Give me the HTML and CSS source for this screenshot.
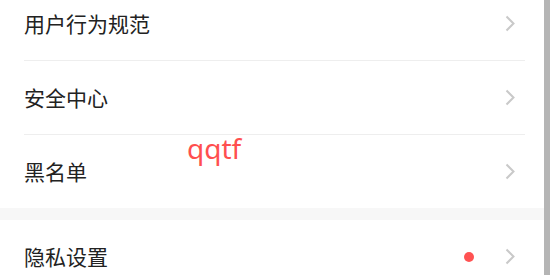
FILE: index.html
```html
<!DOCTYPE html>
<html lang="zh">
<head>
<meta charset="utf-8">
<link rel="stylesheet" href="styles.css">
</head>
<body>
<div class="screen">
  <div class="content">
    <div class="list">
      <div class="row">
        <span class="label">用户行为规范</span>
        <svg class="chev" width="10" height="17" viewBox="0 0 10 17"><path d="M1.5 1.5 L8.5 8.5 L1.5 15.5" fill="none" stroke="#c9c9c9" stroke-width="2"/></svg>
      </div>
      <div class="row">
        <span class="label">安全中心</span>
        <svg class="chev" width="10" height="17" viewBox="0 0 10 17"><path d="M1.5 1.5 L8.5 8.5 L1.5 15.5" fill="none" stroke="#c9c9c9" stroke-width="2"/></svg>
      </div>
      <div class="row last">
        <span class="label">黑名单</span>
        <span class="tag">qqtf</span>
        <svg class="chev" width="10" height="17" viewBox="0 0 10 17"><path d="M1.5 1.5 L8.5 8.5 L1.5 15.5" fill="none" stroke="#c9c9c9" stroke-width="2"/></svg>
      </div>
    </div>
    <div class="gap"></div>
    <div class="list">
      <div class="row last">
        <span class="label">隐私设置</span>
        <span class="dot"></span>
        <svg class="chev" width="10" height="17" viewBox="0 0 10 17"><path d="M1.5 1.5 L8.5 8.5 L1.5 15.5" fill="none" stroke="#c9c9c9" stroke-width="2"/></svg>
      </div>
    </div>
  </div>
  <div class="scrollbar"></div>
</div>
</body>
</html>
```
FILE: styles.css
```css
html, body {
  margin: 0;
  padding: 0;
  background: #ffffff;
  overflow: hidden;
}
.screen {
  display: flex;
  width: 550px;
  height: 275px;
  overflow: hidden;
}
.content {
  flex: 1;
  margin-top: -13px;
  background: #ffffff;
}
.scrollbar {
  width: 6px;
  background: #b5b5b5;
  flex-shrink: 0;
}
.list {
  padding-left: 24px;
  padding-right: 19px;
}
.row {
  position: relative;
  display: flex;
  align-items: center;
  height: 73px;
  border-bottom: 1px solid #eeeeee;
  padding-right: 10px;
}
.row.last {
  border-bottom: none;
}
.label {
  flex: 1;
  font-family: "Noto Sans CJK SC", sans-serif;
  font-size: 21px;
  color: #222222;
  line-height: 1;
}
.chev {
  display: block;
  flex-shrink: 0;
}
.dot {
  width: 10px;
  height: 10px;
  border-radius: 50%;
  background: #ff5252;
  margin-right: 31px;
}
.tag {
  position: absolute;
  left: 163px;
  top: -3px;
  font-family: "Noto Sans", sans-serif;
  font-size: 28px;
  color: #ff4f4f;
  line-height: 1.2;
}
.gap {
  height: 12px;
  background: #f7f7f7;
}
```
